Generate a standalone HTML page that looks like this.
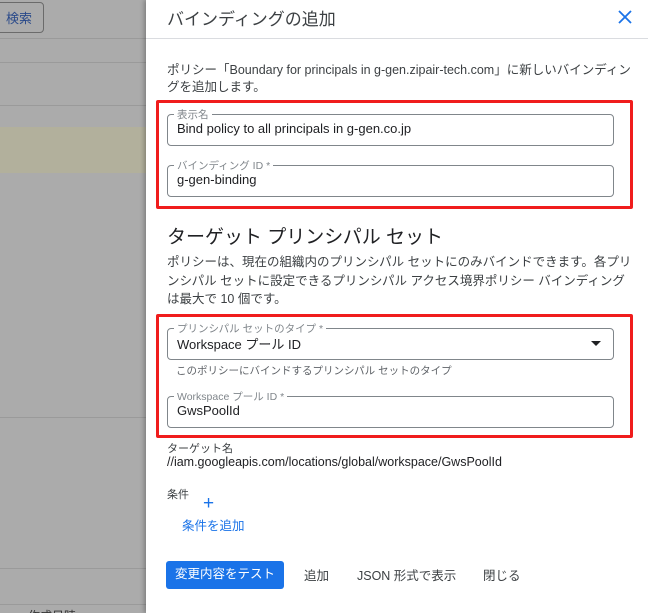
<!DOCTYPE html>
<html><head><meta charset="utf-8"><style>
*{box-sizing:border-box;margin:0;padding:0}
html,body{width:648px;height:613px;overflow:hidden}
body{position:relative;background:#ababab;font-family:"Liberation Sans","Noto Sans CJK JP",sans-serif;color:#202124}
.a{position:absolute;white-space:nowrap}
.hl{position:absolute;left:0;width:146px;height:1px;background:#9a9a9a}
.panel{position:absolute;left:146px;top:0;width:502px;height:613px;background:#fff;box-shadow:-2px 0 4px rgba(0,0,0,.25)}
.red{position:absolute;left:10px;width:477px;border:3px solid #f01c1c;border-radius:2px}
.inp{position:absolute;left:21px;width:447px;height:32px;border:1px solid #80868b;border-radius:4px}
.lab{position:absolute;top:-8px;left:6px;background:#fff;padding:0 3px;font-size:10.5px;color:#80868b}
.val{position:absolute;left:9px;top:6px;font-size:13px;color:#202124}
</style></head><body>
<div class="a" style="left:-10px;top:2px;width:54px;height:31px;border:1px solid #6b6b6b;border-radius:4px"></div>
<div class="a" style="left:6px;top:8px;font-size:13px;color:#2a4a8a">検索</div>
<div class="hl" style="top:38px"></div>
<div class="hl" style="top:62px"></div>
<div class="hl" style="top:105px"></div>
<div class="a" style="left:0;top:127px;width:146px;height:46px;background:#b2b09c"></div>
<div class="hl" style="top:417px"></div>
<div class="hl" style="top:568px"></div>
<div class="hl" style="top:604px"></div>
<div class="a" style="left:28px;top:607px;font-size:12px;color:#333">作成日時</div>
<div class="panel">
<div class="a" style="left:21px;top:5px;font-size:17px;color:#3c4043">バインディングの追加</div>
<svg class="a" style="left:472px;top:10px" width="14" height="14" viewBox="0 0 14 14"><path d="M1 1L13 13M13 1L1 13" stroke="#1a73e8" stroke-width="1.8"/></svg>
<div class="a" style="left:0;top:38px;width:502px;height:1px;background:#dadce0"></div>
<div class="a" style="left:21px;top:62px;font-size:12.5px;line-height:17px;color:#3c4043;white-space:normal;width:470px">ポリシー「Boundary for principals in g-gen.zipair-tech.com」に新しいバインディングを追加します。</div>
<div class="red" style="top:100px;height:109px"></div>
<div class="inp" style="top:114px"><span class="lab">表示名</span><span class="val">Bind policy to all principals in g-gen.co.jp</span></div>
<div class="inp" style="top:165px"><span class="lab">バインディング ID *</span><span class="val">g-gen-binding</span></div>
<div class="a" style="left:21px;top:222px;font-size:19px;color:#202124">ターゲット プリンシパル セット</div>
<div class="a" style="left:21px;top:253px;font-size:12.5px;line-height:18.5px;color:#3c4043;white-space:normal;width:470px">ポリシーは、現在の組織内のプリンシパル セットにのみバインドできます。各プリンシパル セットに設定できるプリンシパル アクセス境界ポリシー バインディングは最大で 10 個です。</div>
<div class="red" style="top:314px;height:124px"></div>
<div class="inp" style="top:328px"><span class="lab">プリンシパル セットのタイプ *</span><span class="val" style="top:5px">Workspace プール ID</span>
<svg class="a" style="left:423px;top:12px" width="10" height="6"><path d="M0 0H10L5 5Z" fill="#202124"/></svg></div>
<div class="a" style="left:30px;top:363px;font-size:10.5px;color:#5f6368">このポリシーにバインドするプリンシパル セットのタイプ</div>
<div class="inp" style="top:396px"><span class="lab">Workspace プール ID *</span><span class="val">GwsPoolId</span></div>
<div class="a" style="left:21px;top:440px;font-size:11px;color:#3c4043">ターゲット名</div>
<div class="a" style="left:21px;top:455px;font-size:12.5px;color:#202124">//iam.googleapis.com/locations/global/workspace/GwsPoolId</div>
<div class="a" style="left:21px;top:486px;font-size:11px;color:#3c4043">条件</div>
<div class="a" style="left:57px;top:494px;font-size:19px;color:#1a73e8;line-height:20px">+</div>
<div class="a" style="left:36px;top:515px;font-size:12.5px;color:#1a73e8">条件を追加</div>
<div class="a" style="left:20px;top:561px;width:118px;height:28px;background:#1a73e8;border-radius:3px;color:#fff;font-size:12.5px;text-align:center;line-height:26px">変更内容をテスト</div>
<div class="a" style="left:158px;top:565px;font-size:12.5px;color:#3c4043">追加</div>
<div class="a" style="left:211px;top:565px;font-size:12.5px;color:#3c4043">JSON 形式で表示</div>
<div class="a" style="left:337px;top:565px;font-size:12.5px;color:#3c4043">閉じる</div>
</div>
</body></html>
